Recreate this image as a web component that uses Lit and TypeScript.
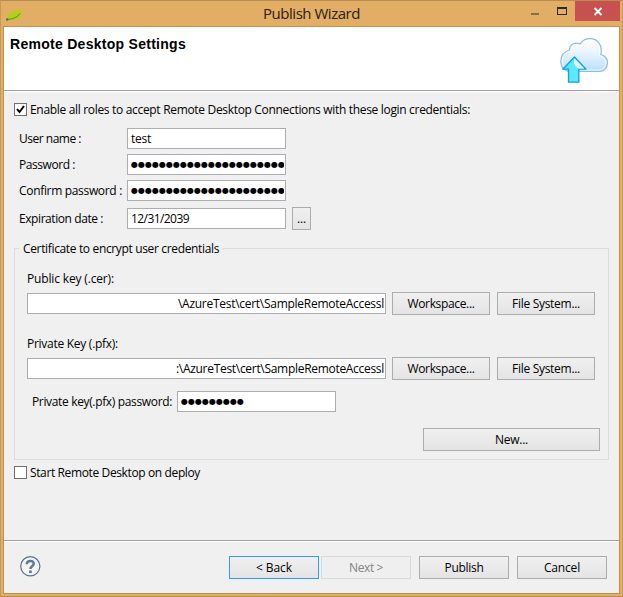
import { LitElement, html, css, svg } from "lit";
import { customElement, property } from "lit/decorators.js";

/** Single-line label that tracks its letters to occupy a given width. */
@customElement("fit-text")
class FitText extends LitElement {
  @property({ type: Number }) w = 0;
  @property() text = "";
  static styles = css`
    :host { display: block; flex: none; white-space: pre; }
    span { display: block; width: max-content; }
  `;
  render() {
    return html`<span>${this.text}</span>`;
  }
  updated() {
    const span = this.renderRoot.querySelector("span") as HTMLElement;
    span.style.letterSpacing = "0px";
    const natural = span.getBoundingClientRect().width;
    if (this.w && natural) {
      span.style.letterSpacing = (this.w - natural) / this.text.length + "px";
    }
  }
}

const t = (text: string, w: number) => html`<fit-text .text=${text} .w=${w}></fit-text>`;

const leaf = svg`
  <path d="M1.500 10.500C1 5 4 3 9 2.700C12 2.500 14 1.500 15.500 0.300C16.500 5 15.500 10.500 10.500 11.500C6.500 12.300 4 11.500 1.500 10.500Z" fill="#b8cc1e"/>
  <path d="M0.500 11.500C6 11.300 11 9.800 14 5.500" fill="none" stroke="#4b9035" stroke-width="1"/>
  <circle cx="1.200" cy="11.500" r="1.200" fill="#3b7d33"/>`;

const cloud = svg`
  <defs>
    <linearGradient id="sky" x1="0" y1="0" x2="0" y2="1">
      <stop offset="0" stop-color="#ffffff"/><stop offset="0.350" stop-color="#eef7fe"/><stop offset="1" stop-color="#b9defb"/>
    </linearGradient>
  </defs>
  <path d="M8 33.500C3.500 32 0.800 28 0.800 23.500C0.800 17.500 4 13.500 9.500 12C9.500 6.500 15 3.500 20 6C22.500 2 26 0.700 30 0.700C37.500 0.700 42.500 6.500 41 16.500C45.500 18 47.800 21.500 47.500 25.500C47 30 44 33 40 33.500Z" fill="url(#sky)" stroke="#8fbbdc" stroke-width="1.200"/>
  <path d="M8 32C4.500 30.500 2.300 27.500 2.300 23.500C2.300 18 5.500 14.500 11 13.300C11 8 15.500 5.500 20.300 8C23 3.500 26.500 2.200 30 2.200C36.500 2.200 41 7.500 39.500 17.500C43.500 19 46 22 45.900 25.500C45.500 29 43 31.500 40 32Z" fill="none" stroke="#fff" stroke-opacity="0.700"/>
  <path d="M14.500 19L26 31.200H18.800V44.200H8.500V31.200H2.800Z" fill="#5ce9fb" stroke="#109cf0" stroke-width="1.300" stroke-linejoin="round"/>
  <path d="M14.700 20.500L24.300 30.500H18.500C14.500 28 13 24 14.700 20.500Z" fill="#dff8fd"/>`;

@customElement("app-root")
class AppRoot extends LitElement {
  static styles = css`
    :host { display: block; width: 623px; height: 597px; font: 12px/15px "Open Sans", "Noto Sans", sans-serif; color: #000; }
    * { box-sizing: border-box; }
    svg { display: block; flex: none; }
    .window { height: 597px; display: flex; flex-direction: column; background: #e2ae66; border: 1px solid #b98c50; border-left-color: #c89a5a; border-right-color: #c99a58; padding: 0 2px 2px; }
    .titlebar { height: 25px; display: grid; grid-template-columns: 1fr auto 1fr; flex: none; }
    .leaf { margin: 7px 0 0 3px; }
    .title { font-size: 15px; line-height: 25px; color: #2b2013; }
    .controls { display: flex; justify-content: flex-end; align-items: flex-start; margin-right: -2px; }
    .close { margin-right: 2px; width: 45px; height: 20px; background: #c75050; }
    .content { flex: 1; display: flex; flex-direction: column; border: 1px solid #c0914f; background: #f0f0f0; min-height: 0; }
    .header { height: 64px; flex: none; display: flex; justify-content: space-between; background: #fff; border-bottom: 1px solid #a0a0a0; padding: 9px 10px 0 6px; font: bold 14px/16px "Liberation Sans", sans-serif; }
    .cloud { margin-top: 2px; }
    .body { flex: 1; border-top: 1px solid #fff; padding: 11px 10px 0; min-height: 0; display: flex; flex-direction: column; }
    .check { display: flex; align-items: center; height: 13px; gap: 3px; flex: none; }
    .box { width: 13px; height: 13px; border: 1px solid #707070; background: #fff; }
    .form { display: grid; grid-template-columns: 108px 159px 19px; margin: 12px 0 0 5px; row-gap: 5px; flex: none; align-items: center; }
    .form > .last { margin-top: 1px; }
    .field { height: 21px; border: 1px solid #abadb3; background: #fff; display: flex; align-items: center; padding: 0 1px 0 3px; overflow: hidden; }
    .clip { flex: 1; min-width: 0; overflow: hidden; display: flex; }
    .right { justify-content: flex-end; }
    .dots { font: 8px/15px "DejaVu Sans", sans-serif; }
    .btn { height: 23px; border: 1px solid #acacac; background: linear-gradient(#f0f0f0, #e4e4e4); display: flex; align-items: center; justify-content: center; }
    .small { width: 19px; margin-left: 6px; }
    fieldset { margin: 10px 0 0; padding: 0 13px 0 12px; border: 1px solid #dcdcdc; height: 220px; flex: none; min-width: 0; width: 595px; }
    legend { padding: 1px 3px 0 4px; margin-left: -8px; height: 17px; }
    .legend { display: flex; }
    .lbl { margin-top: 14px; height: 16px; }
    .second { margin-top: 21px; }
    .row { display: grid; grid-template-columns: 359px 98px 98px; column-gap: 6px; align-items: center; margin-top: 5px; }
    .row > :last-child { margin-left: 1px; margin-right: -1px; }
    .pfx { display: flex; align-items: center; margin: 11px 0 0 5px; }
    .pfx .field { width: 159px; margin-left: 5px; }
    .new { width: 177px; margin: 16px 0 0 396px; }
    .start { margin-top: 6px; }
    .footer { height: 53px; flex: none; border-top: 1px solid #a0a0a0; box-shadow: inset 0 1px #fff; display: flex; padding: 15px 12px 0 15px; }
    .help { margin-top: -1px; }
    .back { width: 90px; margin-left: auto; border-color: #3399ff; }
    .next { width: 90px; margin-left: 2px; color: #838383; border-color: #d9d9d9; background: #efefef; }
    .wide { width: 90px; margin-left: 8px; }
  `;

  secret(n: number) {
    return html`<div class="field"><div class="clip dots">${t("●".repeat(n), n * 7)}</div></div>`;
  }

  fileRow(path: string, w: number) {
    return html`<div class="row">
      <div class="field"><div class="clip right">${t(path, w)}</div></div>
      <div class="btn">${t("Workspace...", 67)}</div>
      <div class="btn">${t("File System...", 68)}</div>
    </div>`;
  }

  render() {
    return html`<div class="window">
      <div class="titlebar">
        <svg class="leaf" width="17" height="14">${leaf}</svg>
        <div class="title">${t("Publish Wizard", 97)}</div>
        <div class="controls">
          <svg width="50" height="20">
            <rect x="6" y="12" width="8" height="2" fill="#8d6c3f"/>
            <rect x="32.500" y="6.500" width="9" height="7" fill="none" stroke="#2a2a2a"/>
            <rect x="32" y="6" width="10" height="2" fill="#2a2a2a"/>
          </svg>
          <svg class="close" viewBox="0 0 45 20"><path d="M19.500 7L26.500 14M26.500 7L19.500 14" stroke="#fff" stroke-width="1.900"/></svg>
        </div>
      </div>
      <div class="content">
        <div class="header">
          ${t("Remote Desktop Settings", 176)}
          <svg class="cloud" width="49" height="46">${cloud}</svg>
        </div>
        <div class="body">
          <div class="check">
            <div class="box"><svg width="11" height="11"><path d="M2 5.200L4.500 8L9 2" fill="none" stroke="#000" stroke-width="2"/></svg></div>
            ${t("Enable all roles to accept Remote Desktop Connections with these login credentials:", 440)}
          </div>
          <div class="form">
            ${t("User name :", 62)}<div class="field">${t("test", 20)}</div><i></i>
            ${t("Password :", 56)}${this.secret(22)}<i></i>
            ${t("Confirm password :", 103)}${this.secret(22)}<i></i>
            <div class="last">${t("Expiration date :", 84)}</div>
            <div class="field last">${t("12/31/2039", 58)}</div>
            <div class="btn small last">${t("...", 9)}</div>
          </div>
          <fieldset>
            <legend><div class="legend">${t("Certificate to encrypt user credentials", 196)}</div></legend>
            <div class="lbl">${t("Public key (.cer):", 87)}</div>
            ${this.fileRow("\\AzureTest\\cert\\SampleRemoteAccessl", 206)}
            <div class="lbl second">${t("Private Key (.pfx):", 91)}</div>
            ${this.fileRow(":\\AzureTest\\cert\\SampleRemoteAccessl", 208)}
            <div class="pfx">${t("Private key(.pfx) password:", 140)}${this.secret(9)}</div>
            <div class="btn new">${t("New...", 33)}</div>
          </fieldset>
          <div class="check start">
            <div class="box"></div>${t("Start Remote Desktop on deploy", 170)}
          </div>
        </div>
        <div class="footer">
          <svg class="help" width="23" height="23">
            <circle cx="11.300" cy="11.300" r="9.600" fill="#f4f5f7" stroke="#5b7090" stroke-width="1.200"/>
            <path d="M7.800 9.200C7.600 4.800 15 4.900 14.700 8.800C14.500 11.300 11.400 11.200 11.400 14" fill="none" stroke="#63779a" stroke-width="2.500"/>
            <rect x="10" y="15.500" width="2.800" height="2.600" fill="#63779a"/>
          </svg>
          <div class="btn back">${t("< Back", 36)}</div>
          <div class="btn next">${t("Next >", 34)}</div>
          <div class="btn wide">${t("Publish", 39)}</div>
          <div class="btn wide">${t("Cancel", 36)}</div>
        </div>
      </div>
    </div>`;
  }
}
